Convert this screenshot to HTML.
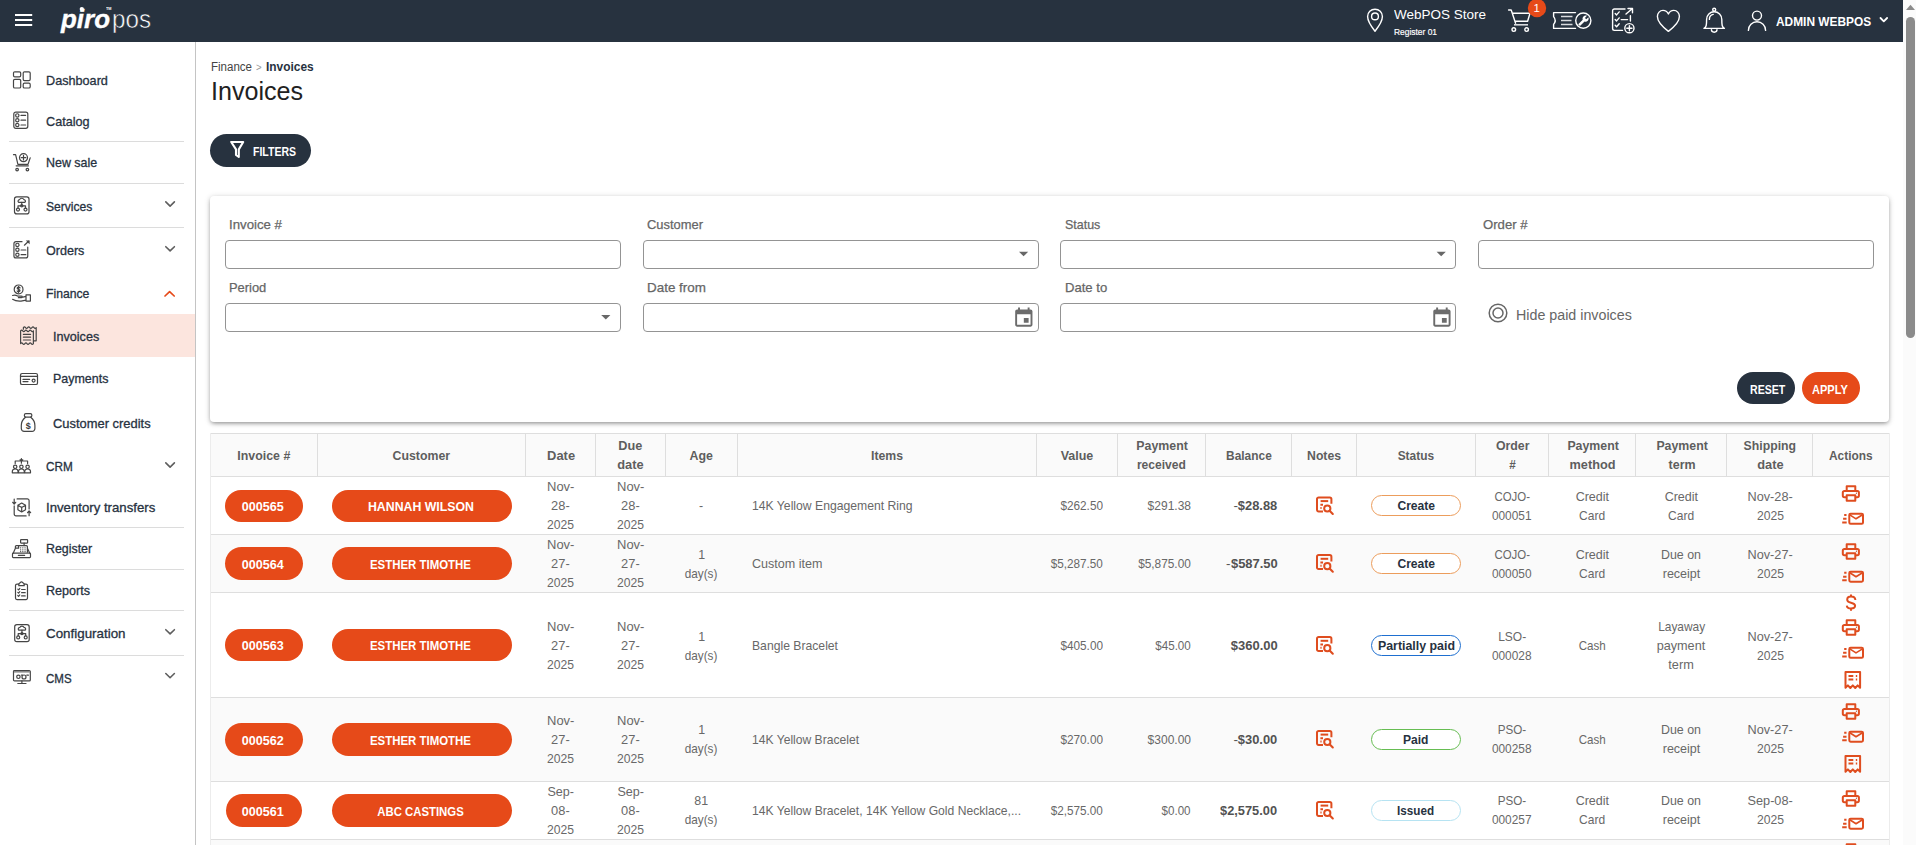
<!DOCTYPE html>
<html><head><meta charset="utf-8"><title>Invoices</title>
<style>
html,body{margin:0;padding:0;background:#fff;overflow:hidden;}
body{width:1916px;height:845px;overflow:hidden;position:relative;font-family:"Liberation Sans", sans-serif;}
.t{position:absolute;white-space:nowrap;line-height:1;}
.b{position:absolute;box-sizing:border-box;}

.inp{border:1px solid #949494;border-radius:4px;background:#fff;}
.pill{background:#e64a19;border-radius:17px;}
.badge{border-radius:11px;background:#fff;}
.hl{background:#e2e2e2;}

</style></head><body>
<div class="b " style="left:0px;top:0px;width:1903px;height:42px;background:#27323f;"></div>
<div class="b " style="left:1903px;top:0px;width:13px;height:845px;background:#fbfbfb;"></div>
<div class="b " style="left:1906px;top:17px;width:9px;height:321px;background:#8b8b8b;border-radius:4.5px;"></div>
<div class="b " style="left:195px;top:42px;width:1px;height:803px;background:#c4c4c4;"></div>
<div class="b " style="left:0px;top:314px;width:195px;height:43px;background:#fce5de;"></div>
<div class="b " style="left:9px;top:141px;width:175px;height:1px;background:#dcdcdc;"></div>
<div class="b " style="left:9px;top:183px;width:175px;height:1px;background:#dcdcdc;"></div>
<div class="b " style="left:9px;top:227px;width:175px;height:1px;background:#dcdcdc;"></div>
<div class="b " style="left:9px;top:527px;width:175px;height:1px;background:#dcdcdc;"></div>
<div class="b " style="left:9px;top:569px;width:175px;height:1px;background:#dcdcdc;"></div>
<div class="b " style="left:9px;top:610px;width:175px;height:1px;background:#dcdcdc;"></div>
<div class="b " style="left:9px;top:655px;width:175px;height:1px;background:#dcdcdc;"></div>
<div class="b " style="left:210px;top:134px;width:101px;height:33px;background:#27323f;border-radius:16.5px;"></div>
<div class="b " style="left:210px;top:196px;width:1679px;height:226px;background:#fff;border-radius:4px;box-shadow:0 2px 4px -1px rgba(0,0,0,.38),0 1px 6px 0 rgba(0,0,0,.16);"></div>
<div class="b inp" style="left:225px;top:240px;width:396px;height:29px;"></div>
<div class="b inp" style="left:643px;top:240px;width:396px;height:29px;"></div>
<div class="b inp" style="left:1060px;top:240px;width:396px;height:29px;"></div>
<div class="b inp" style="left:1478px;top:240px;width:396px;height:29px;"></div>
<div class="b inp" style="left:225px;top:303px;width:396px;height:29px;"></div>
<div class="b inp" style="left:643px;top:303px;width:396px;height:29px;"></div>
<div class="b inp" style="left:1060px;top:303px;width:396px;height:29px;"></div>
<div class="b " style="left:1737px;top:372px;width:58px;height:32px;background:#27323f;border-radius:16px;"></div>
<div class="b " style="left:1802px;top:372px;width:58px;height:32px;background:#e64a19;border-radius:16px;"></div>
<div class="b " style="left:210px;top:433px;width:1680px;height:43px;background:#fafafa;"></div>
<div class="b " style="left:210px;top:535px;width:1680px;height:57px;background:#fafafa;"></div>
<div class="b " style="left:210px;top:698px;width:1680px;height:83px;background:#fafafa;"></div>
<div class="b " style="left:210px;top:840px;width:1680px;height:6px;background:#fafafa;"></div>
<div class="b " style="left:210px;top:433px;width:1680px;height:1px;background:#dedede;"></div>
<div class="b " style="left:210px;top:476px;width:1680px;height:1px;background:#dedede;"></div>
<div class="b " style="left:210px;top:534px;width:1680px;height:1px;background:#dedede;"></div>
<div class="b " style="left:210px;top:592px;width:1680px;height:1px;background:#dedede;"></div>
<div class="b " style="left:210px;top:697px;width:1680px;height:1px;background:#dedede;"></div>
<div class="b " style="left:210px;top:781px;width:1680px;height:1px;background:#dedede;"></div>
<div class="b " style="left:210px;top:839px;width:1680px;height:1px;background:#dedede;"></div>
<div class="b " style="left:210px;top:433px;width:1px;height:412px;background:#ececec;"></div>
<div class="b " style="left:1889px;top:433px;width:1px;height:412px;background:#ececec;"></div>
<div class="b " style="left:317px;top:434px;width:1px;height:42px;background:#dedede;"></div>
<div class="b " style="left:525px;top:434px;width:1px;height:42px;background:#dedede;"></div>
<div class="b " style="left:595px;top:434px;width:1px;height:42px;background:#dedede;"></div>
<div class="b " style="left:665px;top:434px;width:1px;height:42px;background:#dedede;"></div>
<div class="b " style="left:737px;top:434px;width:1px;height:42px;background:#dedede;"></div>
<div class="b " style="left:1036px;top:434px;width:1px;height:42px;background:#dedede;"></div>
<div class="b " style="left:1117px;top:434px;width:1px;height:42px;background:#dedede;"></div>
<div class="b " style="left:1205px;top:434px;width:1px;height:42px;background:#dedede;"></div>
<div class="b " style="left:1291px;top:434px;width:1px;height:42px;background:#dedede;"></div>
<div class="b " style="left:1356px;top:434px;width:1px;height:42px;background:#dedede;"></div>
<div class="b " style="left:1475px;top:434px;width:1px;height:42px;background:#dedede;"></div>
<div class="b " style="left:1548px;top:434px;width:1px;height:42px;background:#dedede;"></div>
<div class="b " style="left:1635px;top:434px;width:1px;height:42px;background:#dedede;"></div>
<div class="b " style="left:1726px;top:434px;width:1px;height:42px;background:#dedede;"></div>
<div class="b " style="left:1812px;top:434px;width:1px;height:42px;background:#dedede;"></div>
<div class="b pill" style="left:225px;top:490px;width:78px;height:32px;"></div>
<div class="b pill" style="left:332px;top:490px;width:180px;height:32px;"></div>
<div class="b badge" style="left:1371px;top:495.0px;width:90px;height:21px;border:1px solid #ec9d5c;"></div>
<div class="b pill" style="left:225px;top:547.4px;width:78px;height:32.5px;"></div>
<div class="b pill" style="left:332px;top:547.4px;width:180px;height:32.5px;"></div>
<div class="b badge" style="left:1371px;top:552.7px;width:90px;height:21px;border:1px solid #ec9d5c;"></div>
<div class="b pill" style="left:225px;top:629.2px;width:78px;height:31.6px;"></div>
<div class="b pill" style="left:332px;top:629.2px;width:180px;height:31.6px;"></div>
<div class="b badge" style="left:1371px;top:634.7px;width:90px;height:21px;border:1px solid #1e6fd0;"></div>
<div class="b pill" style="left:225px;top:722.9px;width:78px;height:33px;"></div>
<div class="b pill" style="left:332px;top:722.9px;width:180px;height:33px;"></div>
<div class="b badge" style="left:1371px;top:728.5px;width:90px;height:21px;border:1px solid #66bd52;"></div>
<div class="b pill" style="left:225.8px;top:794px;width:76.4px;height:32.8px;"></div>
<div class="b pill" style="left:332px;top:794px;width:180px;height:32.8px;"></div>
<div class="b badge" style="left:1371px;top:799.5px;width:90px;height:21px;border:1px solid #b6e3f2;"></div>
<svg class="b" style="left:0;top:0" width="1916" height="845" viewBox="0 0 1916 845" fill="none">
<path d="M1906 10 L1910.5 4.8 L1915 10Z" fill="#8b8b8b"/>
<rect x="15" y="14" width="17.2" height="2" fill="#fff"/>
<rect x="15" y="19" width="17.2" height="2" fill="#fff"/>
<rect x="15" y="24" width="17.2" height="2" fill="#fff"/>
<circle cx="81.8" cy="9.1" r="2.15" fill="#fff"/>
<path d="M1375 31.3 C1375 31.3 1367.6 22 1367.6 16.6 A7.4 7.4 0 0 1 1382.4 16.6 C1382.4 22 1375 31.3 1375 31.3Z" stroke="#fff" stroke-width="1.4" stroke-linecap="round" stroke-linejoin="round"/><circle cx="1375" cy="16.4" r="3.4" stroke="#fff" stroke-width="1.4" stroke-linecap="round" stroke-linejoin="round"/>
<path d="M1508.6 10 H1511.2 L1515.6 23.2 M1513 13.2 H1530 L1527.6 21.3 H1515.2" stroke="#fff" stroke-width="1.4" stroke-linecap="round" stroke-linejoin="round"/><path d="M1514 24.8 H1528" stroke="#d8dadd" stroke-width="1.6"/><circle cx="1513.8" cy="29.6" r="1.8" stroke="#fff" stroke-width="1.4" stroke-linecap="round" stroke-linejoin="round"/><circle cx="1526.6" cy="29.6" r="1.8" stroke="#fff" stroke-width="1.4" stroke-linecap="round" stroke-linejoin="round"/>
<circle cx="1537" cy="8.1" r="9.2" fill="#e64a19"/>
<path d="M1575.5 12.6 H1553.6 V16.6 Q1556.8 20.5 1553.6 24.4 V28.4 H1575.5" stroke="#fff" stroke-width="1.4" stroke-linecap="round" stroke-linejoin="round"/><path d="M1561 16.6 H1572.5 M1561 20.5 H1571.5 M1561 24.4 H1572.5" stroke="#d8dadd" stroke-width="1.5"/><circle cx="1583.3" cy="20.6" r="7.6" stroke="#fff" stroke-width="1.4" stroke-linecap="round" stroke-linejoin="round"/><g transform="translate(1583.5 20.7) scale(-0.47 0.47) translate(-12 -12)"><path fill="#fff" d="M22.7 19l-9.1-9.1c.9-2.3.4-5-1.5-6.9-2-2-5-2.4-7.4-1.3L9 6 6 9 1.6 4.7C.4 7.1.9 10.1 2.9 12.1c1.9 1.9 4.6 2.4 6.9 1.5l9.1 9.1c.4.4 1 .4 1.4 0l2.3-2.3c.5-.4.5-1.1.1-1.4z"/></g>
<path d="M1625 9 H1614.4 A1.8 1.8 0 0 0 1612.6 10.8 V28.6 A1.8 1.8 0 0 0 1614.4 30.4 H1622.5" stroke="#fff" stroke-width="1.4" stroke-linecap="round" stroke-linejoin="round"/><path d="M1615.2 13.4 l1.4 1.5 l2.6 -3 M1615.2 19.4 l1.4 1.5 l2.6 -3 M1615.2 25.2 l1.4 1.5 l2.6 -3" stroke="#fff" stroke-width="1.4" stroke-linecap="round" stroke-linejoin="round" stroke-width="1.3"/><path d="M1626 14 L1632.2 8.8 M1628 8.5 H1632.5 V12.8" stroke="#fff" stroke-width="1.4" stroke-linecap="round" stroke-linejoin="round" stroke-width="1.2"/><path d="M1621.2 19.6 H1627.6 M1630.4 15.6 V21" stroke="#fff" stroke-width="1.4" stroke-linecap="round" stroke-linejoin="round" stroke-width="1.5"/><circle cx="1629.4" cy="28.2" r="4.6" stroke="#fff" stroke-width="1.4" stroke-linecap="round" stroke-linejoin="round" stroke-width="1.3"/><path d="M1626.8 28.2 H1632 M1629.4 25.6 V30.8" stroke="#fff" stroke-width="1.4" stroke-linecap="round" stroke-linejoin="round" stroke-width="1.4"/>
<path d="M1668.4 31.4 C1660 25 1657.4 20.6 1657.4 16.6 C1657.4 12.9 1660 10.4 1663 10.4 C1665.5 10.4 1667.4 11.9 1668.4 13.9 C1669.4 11.9 1671.3 10.4 1673.8 10.4 C1676.8 10.4 1679.4 12.9 1679.4 16.6 C1679.4 20.6 1676.8 25 1668.4 31.4Z" stroke="#fff" stroke-width="1.4" stroke-linecap="round" stroke-linejoin="round"/>
<circle cx="1714.2" cy="9.8" r="1.5" stroke="#fff" stroke-width="1.4" stroke-linecap="round" stroke-linejoin="round" stroke-width="1.2"/><path d="M1704 28.4 C1706.4 27 1706.6 25 1706.6 19.4 A7.6 7.6 0 0 1 1721.8 19.4 C1721.8 25 1722 27 1724.4 28.4 Z" stroke="#fff" stroke-width="1.4" stroke-linecap="round" stroke-linejoin="round"/><path d="M1709.4 19.4 A5 5 0 0 1 1713.2 14.4" stroke="#fff" stroke-width="1.4" stroke-linecap="round" stroke-linejoin="round" stroke-width="1"/><path d="M1711.4 29.6 A2.8 2.6 0 0 0 1717 29.6" stroke="#fff" stroke-width="1.4" stroke-linecap="round" stroke-linejoin="round"/>
<circle cx="1757" cy="15.6" r="4.5" stroke="#fff" stroke-width="1.4" stroke-linecap="round" stroke-linejoin="round" stroke-width="1.5"/><path d="M1748.4 30.4 A8.6 8.6 0 0 1 1765.6 30.4" stroke="#fff" stroke-width="1.4" stroke-linecap="round" stroke-linejoin="round" stroke-width="1.5"/>
<path d="M1880.5 18 L1883.8 21.3 L1887.1 18" stroke="#fff" stroke-width="1.8" stroke-linecap="round" stroke-linejoin="round"/>
<path d="M165.8 201.9 L170.1 206.1 L174.4 201.9" stroke="#5e5e5e" stroke-width="1.6" stroke-linecap="round" stroke-linejoin="round"/>
<path d="M165.8 246.7 L170.1 250.89999999999998 L174.4 246.7" stroke="#5e5e5e" stroke-width="1.6" stroke-linecap="round" stroke-linejoin="round"/>
<path d="M165.8 462.9 L170.1 467.09999999999997 L174.4 462.9" stroke="#5e5e5e" stroke-width="1.6" stroke-linecap="round" stroke-linejoin="round"/>
<path d="M165.8 629.7 L170.1 633.9000000000001 L174.4 629.7" stroke="#5e5e5e" stroke-width="1.6" stroke-linecap="round" stroke-linejoin="round"/>
<path d="M165.8 673.5 L170.1 677.7 L174.4 673.5" stroke="#5e5e5e" stroke-width="1.6" stroke-linecap="round" stroke-linejoin="round"/>
<path d="M165 296 L169.6 291.7 L174.2 296" stroke="#e64a19" stroke-width="1.7" stroke-linecap="round" stroke-linejoin="round"/>
<g transform="translate(13 71.3)" ><rect x=".5" y=".5" width="7.2" height="5" rx="1.3" stroke="#454545" stroke-width="1.2" stroke-linecap="round" stroke-linejoin="round"/><rect x=".5" y="8" width="7.2" height="8.7" rx="1.3" stroke="#454545" stroke-width="1.2" stroke-linecap="round" stroke-linejoin="round"/><rect x="10.2" y=".5" width="7" height="8.8" rx="1.3" stroke="#454545" stroke-width="1.2" stroke-linecap="round" stroke-linejoin="round"/><rect x="10.2" y="11.8" width="7" height="4.9" rx="1.3" stroke="#454545" stroke-width="1.2" stroke-linecap="round" stroke-linejoin="round"/></g>
<g transform="translate(13 111.5)" ><rect x=".8" y=".6" width="14" height="16.2" rx="2" stroke="#454545" stroke-width="1.2" stroke-linecap="round" stroke-linejoin="round"/><circle cx="4.3" cy="3.9" r="1.65" stroke="#454545" stroke-width="1.2" stroke-linecap="round" stroke-linejoin="round"/><circle cx="4.3" cy="8.7" r="1.65" stroke="#454545" stroke-width="1.2" stroke-linecap="round" stroke-linejoin="round"/><circle cx="4.3" cy="13.5" r="1.65" stroke="#454545" stroke-width="1.2" stroke-linecap="round" stroke-linejoin="round"/><path d="M8 3.9 H12.6 M8 8.7 H12.6 M8 13.5 H12.6" stroke="#454545" stroke-width="1.2" stroke-linecap="round" stroke-linejoin="round" stroke-width="1.4"/></g>
<g transform="translate(13 153.3)" ><path d="M.5 1.4 H2.6 L4.9 11 H15 L17.2 4.6 M3.2 12.5 H15.4" stroke="#454545" stroke-width="1.2" stroke-linecap="round" stroke-linejoin="round"/><circle cx="10.5" cy="4.4" r="4" stroke="#454545" stroke-width="1.2" stroke-linecap="round" stroke-linejoin="round"/><path d="M8.2 4.4 H12.8 M10.5 2.1 V6.7" stroke="#454545" stroke-width="1.2" stroke-linecap="round" stroke-linejoin="round"/><circle cx="4.1" cy="16.3" r="1.3" stroke="#454545" stroke-width="1.2" stroke-linecap="round" stroke-linejoin="round"/><circle cx="14.4" cy="16.3" r="1.3" stroke="#454545" stroke-width="1.2" stroke-linecap="round" stroke-linejoin="round"/></g>
<g transform="translate(14 196.4)" ><rect x=".5" y=".5" width="14.5" height="17" rx="2.2" stroke="#454545" stroke-width="1.2" stroke-linecap="round" stroke-linejoin="round"/><path d="M4.6 6 A1.6 1.6 0 0 1 5.6 3.2 A2.4 2.4 0 0 1 9.9 3.2 A1.6 1.6 0 0 1 10.9 6 Z" stroke="#454545" stroke-width="1.2" stroke-linecap="round" stroke-linejoin="round" stroke-width=".9"/><path d="M7.75 6 V9.4 M4 11.5 V9.4 H11.5 V11.5" stroke="#454545" stroke-width="1.2" stroke-linecap="round" stroke-linejoin="round" stroke-width=".9"/><circle cx="4" cy="13.2" r="1.5" stroke="#454545" stroke-width="1.2" stroke-linecap="round" stroke-linejoin="round" stroke-width=".9"/><circle cx="11.5" cy="13.2" r="1.5" stroke="#454545" stroke-width="1.2" stroke-linecap="round" stroke-linejoin="round" stroke-width=".9"/><circle cx="7.75" cy="9.4" r="1.1" stroke="#454545" stroke-width="1.2" stroke-linecap="round" stroke-linejoin="round" stroke-width=".9"/></g>
<g transform="translate(13 240.2)" ><path d="M9 1.45 H2.9 A1.95 1.95 0 0 0 .95 3.4 V15.8 A1.95 1.95 0 0 0 2.9 17.75 H12.8 A1.95 1.95 0 0 0 14.75 15.8 V6.8" stroke="#454545" stroke-width="1.2" stroke-linecap="round" stroke-linejoin="round"/><circle cx="4.4" cy="4.7" r="1.65" stroke="#454545" stroke-width="1.2" stroke-linecap="round" stroke-linejoin="round"/><circle cx="4.4" cy="9.6" r="1.65" stroke="#454545" stroke-width="1.2" stroke-linecap="round" stroke-linejoin="round"/><circle cx="4.4" cy="14.5" r="1.65" stroke="#454545" stroke-width="1.2" stroke-linecap="round" stroke-linejoin="round"/><path d="M8.1 9.8 H12.8 M8.1 14.5 H12.8" stroke="#454545" stroke-width="1.2" stroke-linecap="round" stroke-linejoin="round" stroke-width="1.4"/><path d="M11.4 5 L15.6 1" stroke="#454545" stroke-width="1.2" stroke-linecap="round" stroke-linejoin="round" stroke-width="1.3"/><path d="M12.8 .2 H16.6 V4 Z" fill="#454545"/></g>
<g transform="translate(12 284.5)" ><circle cx="6.6" cy="4.9" r="4.4" stroke="#454545" stroke-width="1.2" stroke-linecap="round" stroke-linejoin="round"/><path d="M8 3.5 C8 2.4 5.2 2.4 5.2 3.8 C5.2 5.2 8 4.6 8 6 C8 7.4 5.2 7.4 5.2 6.3 M6.6 1.8 V8" stroke="#454545" stroke-width="1.2" stroke-linecap="round" stroke-linejoin="round" stroke-width=".85"/><path d="M.6 11 C2.5 10.4 4 10.6 5.6 11.6 H9.4 C10.6 11.6 10.6 13.2 9.4 13.2 H6.4 M9.8 12.9 L14 11.8 M.6 14.8 C3 16.4 6 16.8 9 16.6 L14 15.6 M14 10.4 H18.4 V16.6 H14 Z" stroke="#454545" stroke-width="1.2" stroke-linecap="round" stroke-linejoin="round"/></g>
<g transform="translate(20 326)" ><path d="M3.4 3.2 V1.6 q1.07 -1.5 2.13 0 t2.13 0 t2.13 0 t2.13 0 t2.13 0 t2.13 0 V14.8 H14" stroke="#454545" stroke-width="1.2" stroke-linecap="round" stroke-linejoin="round"/><path d="M.6 4.8 q1.07 -1.5 2.13 0 t2.13 0 t2.13 0 t2.13 0 t2.13 0 t2.13 0 V17.6 q-1.07 1.5 -2.13 0 t-2.13 0 t-2.13 0 t-2.13 0 t-2.13 0 t-2.13 0 Z" stroke="#454545" stroke-width="1.2" stroke-linecap="round" stroke-linejoin="round"/><path d="M3.4 8.4 H10.6 M3.4 11.2 H10.6 M3.4 14 H10.6" stroke="#454545" stroke-width="1.2" stroke-linecap="round" stroke-linejoin="round"/></g>
<g transform="translate(20 373)" ><rect x=".5" y=".5" width="17" height="11" rx="1.6" stroke="#454545" stroke-width="1.2" stroke-linecap="round" stroke-linejoin="round"/><path d="M.5 3.4 H17.5 M3 6.4 H9.6 M3 8.6 H8" stroke="#454545" stroke-width="1.2" stroke-linecap="round" stroke-linejoin="round"/><circle cx="13.6" cy="7.6" r="1.5" stroke="#454545" stroke-width="1.2" stroke-linecap="round" stroke-linejoin="round"/></g>
<g transform="translate(20.5 413)" ><rect x="3.9" y=".6" width="7.4" height="3.5" rx="1.4" stroke="#454545" stroke-width="1.2" stroke-linecap="round" stroke-linejoin="round"/><path d="M5 4.2 C2.4 6.2 .8 9 .8 12.4 V15.6 A2.8 2.8 0 0 0 3.6 18.4 H11.6 A2.8 2.8 0 0 0 14.4 15.6 V12.4 C14.4 9 12.8 6.2 10.2 4.2" stroke="#454545" stroke-width="1.2" stroke-linecap="round" stroke-linejoin="round"/></g>
<g transform="translate(12 458.2)" ><path d="M9.4 .4 V5 M3.2 5.4 V2.8 H15.6 V5.4 M8 1.6 H10.8" stroke="#454545" stroke-width="1.2" stroke-linecap="round" stroke-linejoin="round" stroke-width=".95"/><circle cx="3.2" cy="8.6" r="1.7" stroke="#454545" stroke-width="1.2" stroke-linecap="round" stroke-linejoin="round" stroke-width=".95"/><path d="M0.30000000000000027 14.6 V13.4 A2.9 2.6 0 0 1 6.1 13.4 V14.6 Z" stroke="#454545" stroke-width="1.2" stroke-linecap="round" stroke-linejoin="round" stroke-width=".95"/><circle cx="9.4" cy="8.6" r="1.7" stroke="#454545" stroke-width="1.2" stroke-linecap="round" stroke-linejoin="round" stroke-width=".95"/><path d="M6.5 14.6 V13.4 A2.9 2.6 0 0 1 12.3 13.4 V14.6 Z" stroke="#454545" stroke-width="1.2" stroke-linecap="round" stroke-linejoin="round" stroke-width=".95"/><circle cx="15.6" cy="8.6" r="1.7" stroke="#454545" stroke-width="1.2" stroke-linecap="round" stroke-linejoin="round" stroke-width=".95"/><path d="M12.7 14.6 V13.4 A2.9 2.6 0 0 1 18.5 13.4 V14.6 Z" stroke="#454545" stroke-width="1.2" stroke-linecap="round" stroke-linejoin="round" stroke-width=".95"/></g>
<g transform="translate(12.5 498.3)" ><path d="M4.6 .6 H14.8 A1.8 1.8 0 0 1 16.6 2.4 V10.6 M13.6 17.6 H3.5 A1.8 1.8 0 0 1 1.7 15.8 V7.6" stroke="#454545" stroke-width="1.2" stroke-linecap="round" stroke-linejoin="round"/><path d="M1.7 .8 V5.6 M.2 4 L1.7 5.8 L3.2 4 M16.6 17.4 V12.8 M15.1 14.4 L16.6 12.6 L18.1 14.4" stroke="#454545" stroke-width="1.2" stroke-linecap="round" stroke-linejoin="round"/><path d="M9.2 4.7 L13 6.9 V11.4 L9.2 13.7 L5.4 11.4 V6.9 Z M5.4 6.9 L9.2 9.1 L13 6.9 M9.2 9.1 V13.7" stroke="#454545" stroke-width="1.2" stroke-linecap="round" stroke-linejoin="round" stroke-width="1.05"/></g>
<g transform="translate(12 539.2)" ><rect x="8.6" y=".5" width="7" height="3.4" rx=".5" stroke="#454545" stroke-width="1.2" stroke-linecap="round" stroke-linejoin="round"/><path d="M12.1 3.9 V6.4" stroke="#454545" stroke-width="1.2" stroke-linecap="round" stroke-linejoin="round"/><path d="M3.4 9 V7.4 A1 1 0 0 1 4.4 6.4 H14.4 A1 1 0 0 1 15.4 7.4 V13 M3.4 9 H6.6 V6.6 M1.2 14 L3.4 9 M15.4 9 L17.8 14" stroke="#454545" stroke-width="1.2" stroke-linecap="round" stroke-linejoin="round"/><rect x=".5" y="14" width="18" height="4.4" rx=".8" stroke="#454545" stroke-width="1.2" stroke-linecap="round" stroke-linejoin="round"/><path d="M6.4 16.2 H12.6" stroke="#454545" stroke-width="1.2" stroke-linecap="round" stroke-linejoin="round"/><path d="M8.6 8.6 h.1 M10.8 8.6 h.1 M13 8.6 h.1 M8.6 10.6 h.1 M10.8 10.6 h.1 M13 10.6 h.1 M8.6 12.4 h.1 M10.8 12.4 h.1 M13 12.4 h.1" stroke="#454545" stroke-width="1.2" stroke-linecap="round" stroke-linejoin="round" stroke-width="1.2"/></g>
<g transform="translate(15 581.3)" ><path d="M3.8 2.8 H2 A1.5 1.5 0 0 0 .5 4.3 V16.8 A1.5 1.5 0 0 0 2 18.3 H11 A1.5 1.5 0 0 0 12.5 16.8 V4.3 A1.5 1.5 0 0 0 11 2.8 H9.2" stroke="#454545" stroke-width="1.2" stroke-linecap="round" stroke-linejoin="round"/><path d="M3.8 4.4 V2.6 L5.4 1.2 A1.3 1.3 0 0 1 7.6 1.2 L9.2 2.6 V4.4 Z" stroke="#454545" stroke-width="1.2" stroke-linecap="round" stroke-linejoin="round"/><path d="M2.8 7.8 l.8 .8 l1.2 -1.4 M2.8 11 l.8 .8 l1.2 -1.4 M2.8 14.2 l.8 .8 l1.2 -1.4 M6.6 8.2 H10.2 M6.6 11.4 H10.2 M6.6 14.6 H10.2" stroke="#454545" stroke-width="1.2" stroke-linecap="round" stroke-linejoin="round" stroke-width=".9"/></g>
<g transform="translate(14.2 624.2)" ><rect x=".5" y=".5" width="14.5" height="17" rx="2.2" stroke="#454545" stroke-width="1.2" stroke-linecap="round" stroke-linejoin="round"/><path d="M4.6 6 A1.6 1.6 0 0 1 5.6 3.2 A2.4 2.4 0 0 1 9.9 3.2 A1.6 1.6 0 0 1 10.9 6 Z" stroke="#454545" stroke-width="1.2" stroke-linecap="round" stroke-linejoin="round" stroke-width=".9"/><path d="M7.75 6 V9.4 M4 11.5 V9.4 H11.5 V11.5" stroke="#454545" stroke-width="1.2" stroke-linecap="round" stroke-linejoin="round" stroke-width=".9"/><circle cx="4" cy="13.2" r="1.5" stroke="#454545" stroke-width="1.2" stroke-linecap="round" stroke-linejoin="round" stroke-width=".9"/><circle cx="11.5" cy="13.2" r="1.5" stroke="#454545" stroke-width="1.2" stroke-linecap="round" stroke-linejoin="round" stroke-width=".9"/><circle cx="7.75" cy="9.4" r="1.1" stroke="#454545" stroke-width="1.2" stroke-linecap="round" stroke-linejoin="round" stroke-width=".9"/></g>
<g transform="translate(13 670)" ><rect x=".5" y=".5" width="16.8" height="10.4" rx="1" stroke="#454545" stroke-width="1.2" stroke-linecap="round" stroke-linejoin="round"/><path d="M.9 1.8 H17" stroke="#8a8a8a" stroke-width="1.6"/><path d="M8.9 10.9 V13.2 M4.8 13.5 H13" stroke="#454545" stroke-width="1.2" stroke-linecap="round" stroke-linejoin="round"/><circle cx="5.4" cy="6.8" r="1.7" stroke="#454545" stroke-width="1.2" stroke-linecap="round" stroke-linejoin="round" stroke-width=".9"/><circle cx="11" cy="7" r="2" stroke="#454545" stroke-width="1.2" stroke-linecap="round" stroke-linejoin="round" stroke-width=".9"/><path d="M8.4 5.2 H9.6 M13.8 5.2 H15.4" stroke="#454545" stroke-width="1.2" stroke-linecap="round" stroke-linejoin="round" stroke-width=".9"/></g>
<path d="M231.2 142 H243.2 L238.8 149.4 V157 L236 155 V149.4 Z" stroke="#fff" stroke-width="2.1" stroke-linejoin="round"/>
<path d="M1019 251.8 h9.2 l-4.6 4.5z" fill="#676767"/>
<path d="M1436.6 251.8 h9.2 l-4.6 4.5z" fill="#676767"/>
<path d="M601.2 315 h9.2 l-4.6 4.5z" fill="#676767"/>
<g transform="translate(1012.3000000000001 306.5) scale(.96)"><path d="M17 12h-5v5h5v-5zM16 1v2H8V1H6v2H5c-1.11 0-1.99.9-1.99 2L3 19c0 1.1.89 2 2 2h14c1.1 0 2-.9 2-2V5c0-1.1-.9-2-2-2h-1V1h-2zm3 18H5V8h14v11z" fill="#6c6c6c"/></g>
<g transform="translate(1430.4 306.5) scale(.96)"><path d="M17 12h-5v5h5v-5zM16 1v2H8V1H6v2H5c-1.11 0-1.99.9-1.99 2L3 19c0 1.1.89 2 2 2h14c1.1 0 2-.9 2-2V5c0-1.1-.9-2-2-2h-1V1h-2zm3 18H5V8h14v11z" fill="#6c6c6c"/></g>
<circle cx="1498" cy="313" r="8.8" stroke="#666" stroke-width="1.5"/><circle cx="1498" cy="313" r="5" stroke="#666" stroke-width="1.5"/>
<g transform="translate(1315.6000000000001 496.0)" ><path d="M7.4 15.4 H3 A1.6 1.6 0 0 1 1.4 13.8 V3 A1.6 1.6 0 0 1 3 1.4 H14.2 A1.6 1.6 0 0 1 15.8 3 V7.8" stroke="#df4d1f" stroke-width="2" stroke-linejoin="round" stroke-linecap="butt"/><path d="M5 5.1 H12.6" stroke="#df4d1f" stroke-width="2" stroke-linejoin="round" stroke-linecap="butt" stroke-width="1.8"/><path d="M4.8 8.7 H7.4 M4.8 12 H6" stroke="#df4d1f" stroke-width="2" stroke-linejoin="round" stroke-linecap="butt" stroke-width="1.6"/><circle cx="11.7" cy="12.5" r="3.1" stroke="#df4d1f" stroke-width="2" stroke-linejoin="round" stroke-linecap="butt" stroke-width="1.8"/><path d="M14 14.8 L17.2 18" stroke="#df4d1f" stroke-linejoin="round" stroke-linecap="round" stroke-width="2.1"/></g>
<g transform="translate(1841.8000000000002 485.15)" ><path d="M4.9 5.8 V1 H13.5 V5.8" stroke="#df4d1f" stroke-width="2" stroke-linejoin="round" stroke-linecap="butt"/><path d="M4.9 12 H2.6 A1.6 1.6 0 0 1 1 10.4 V7.4 A1.6 1.6 0 0 1 2.6 5.8 H15.5 A1.6 1.6 0 0 1 17.1 7.4 V10.4 A1.6 1.6 0 0 1 15.5 12 H13.5" stroke="#df4d1f" stroke-width="2" stroke-linejoin="round" stroke-linecap="butt"/><rect x="4.9" y="10.2" width="8.6" height="5.5" stroke="#df4d1f" stroke-width="2" stroke-linejoin="round" stroke-linecap="butt"/><circle cx="14.6" cy="8" r=".6" fill="#b03a14"/></g>
<g transform="translate(1841.8000000000002 512.8)" ><rect x="7.5" y="1" width="13.7" height="9.9" rx="1.3" stroke="#df4d1f" stroke-width="2" stroke-linejoin="round" stroke-linecap="butt"/><path d="M8 2 L14.2 6 L20.7 2" stroke="#df4d1f" stroke-linejoin="round" stroke-linecap="round" stroke-width="1.6"/><path d="M2.4 2.1 H4.7 M1.3 6 H4.7 M.4 9.6 H4.9" stroke="#df4d1f" stroke-width="2" stroke-linejoin="round" stroke-linecap="butt" stroke-width="1.8"/></g>
<g transform="translate(1315.6000000000001 553.7)" ><path d="M7.4 15.4 H3 A1.6 1.6 0 0 1 1.4 13.8 V3 A1.6 1.6 0 0 1 3 1.4 H14.2 A1.6 1.6 0 0 1 15.8 3 V7.8" stroke="#df4d1f" stroke-width="2" stroke-linejoin="round" stroke-linecap="butt"/><path d="M5 5.1 H12.6" stroke="#df4d1f" stroke-width="2" stroke-linejoin="round" stroke-linecap="butt" stroke-width="1.8"/><path d="M4.8 8.7 H7.4 M4.8 12 H6" stroke="#df4d1f" stroke-width="2" stroke-linejoin="round" stroke-linecap="butt" stroke-width="1.6"/><circle cx="11.7" cy="12.5" r="3.1" stroke="#df4d1f" stroke-width="2" stroke-linejoin="round" stroke-linecap="butt" stroke-width="1.8"/><path d="M14 14.8 L17.2 18" stroke="#df4d1f" stroke-linejoin="round" stroke-linecap="round" stroke-width="2.1"/></g>
<g transform="translate(1841.8000000000002 543.15)" ><path d="M4.9 5.8 V1 H13.5 V5.8" stroke="#df4d1f" stroke-width="2" stroke-linejoin="round" stroke-linecap="butt"/><path d="M4.9 12 H2.6 A1.6 1.6 0 0 1 1 10.4 V7.4 A1.6 1.6 0 0 1 2.6 5.8 H15.5 A1.6 1.6 0 0 1 17.1 7.4 V10.4 A1.6 1.6 0 0 1 15.5 12 H13.5" stroke="#df4d1f" stroke-width="2" stroke-linejoin="round" stroke-linecap="butt"/><rect x="4.9" y="10.2" width="8.6" height="5.5" stroke="#df4d1f" stroke-width="2" stroke-linejoin="round" stroke-linecap="butt"/><circle cx="14.6" cy="8" r=".6" fill="#b03a14"/></g>
<g transform="translate(1841.8000000000002 570.75)" ><rect x="7.5" y="1" width="13.7" height="9.9" rx="1.3" stroke="#df4d1f" stroke-width="2" stroke-linejoin="round" stroke-linecap="butt"/><path d="M8 2 L14.2 6 L20.7 2" stroke="#df4d1f" stroke-linejoin="round" stroke-linecap="round" stroke-width="1.6"/><path d="M2.4 2.1 H4.7 M1.3 6 H4.7 M.4 9.6 H4.9" stroke="#df4d1f" stroke-width="2" stroke-linejoin="round" stroke-linecap="butt" stroke-width="1.8"/></g>
<g transform="translate(1315.6000000000001 635.7)" ><path d="M7.4 15.4 H3 A1.6 1.6 0 0 1 1.4 13.8 V3 A1.6 1.6 0 0 1 3 1.4 H14.2 A1.6 1.6 0 0 1 15.8 3 V7.8" stroke="#df4d1f" stroke-width="2" stroke-linejoin="round" stroke-linecap="butt"/><path d="M5 5.1 H12.6" stroke="#df4d1f" stroke-width="2" stroke-linejoin="round" stroke-linecap="butt" stroke-width="1.8"/><path d="M4.8 8.7 H7.4 M4.8 12 H6" stroke="#df4d1f" stroke-width="2" stroke-linejoin="round" stroke-linecap="butt" stroke-width="1.6"/><circle cx="11.7" cy="12.5" r="3.1" stroke="#df4d1f" stroke-width="2" stroke-linejoin="round" stroke-linecap="butt" stroke-width="1.8"/><path d="M14 14.8 L17.2 18" stroke="#df4d1f" stroke-linejoin="round" stroke-linecap="round" stroke-width="2.1"/></g>
<g transform="translate(1846.1 594.1)" ><path d="M9.3 5.9 C9.1 3.7 7.4 2.5 4.9 2.5 C2.5 2.5 1.1 3.8 1.1 5.6 C1.1 7.3 2.4 8 4.9 8.6 C7.6 9.2 9 10 9 11.7 C9 13.4 7.4 14.4 4.9 14.4 C2.5 14.4 .9 13.3 .7 11.5 M4.9 .3 V2.5 M4.9 14.4 V16.7" stroke="#df4d1f" stroke-width="2" stroke-linejoin="round" stroke-linecap="butt" stroke-width="1.9" stroke-linecap="round"/></g>
<g transform="translate(1841.8000000000002 619.15)" ><path d="M4.9 5.8 V1 H13.5 V5.8" stroke="#df4d1f" stroke-width="2" stroke-linejoin="round" stroke-linecap="butt"/><path d="M4.9 12 H2.6 A1.6 1.6 0 0 1 1 10.4 V7.4 A1.6 1.6 0 0 1 2.6 5.8 H15.5 A1.6 1.6 0 0 1 17.1 7.4 V10.4 A1.6 1.6 0 0 1 15.5 12 H13.5" stroke="#df4d1f" stroke-width="2" stroke-linejoin="round" stroke-linecap="butt"/><rect x="4.9" y="10.2" width="8.6" height="5.5" stroke="#df4d1f" stroke-width="2" stroke-linejoin="round" stroke-linecap="butt"/><circle cx="14.6" cy="8" r=".6" fill="#b03a14"/></g>
<g transform="translate(1841.8000000000002 646.8499999999999)" ><rect x="7.5" y="1" width="13.7" height="9.9" rx="1.3" stroke="#df4d1f" stroke-width="2" stroke-linejoin="round" stroke-linecap="butt"/><path d="M8 2 L14.2 6 L20.7 2" stroke="#df4d1f" stroke-linejoin="round" stroke-linecap="round" stroke-width="1.6"/><path d="M2.4 2.1 H4.7 M1.3 6 H4.7 M.4 9.6 H4.9" stroke="#df4d1f" stroke-width="2" stroke-linejoin="round" stroke-linecap="butt" stroke-width="1.8"/></g>
<g transform="translate(1844.5 671.1)" ><path d="M1 16.6 V1 H15.6 V16.6 L13.2 14.3 L10.75 16.9 L8.3 14.3 L5.85 16.9 L3.4 14.3 Z" stroke="#df4d1f" stroke-width="2" stroke-linejoin="round" stroke-linecap="butt"/><path d="M4 4.8 H8.8 M11.3 4.8 H12.7 M4 8.4 H8.8 M11.3 8.4 H12.7" stroke="#df4d1f" stroke-width="2" stroke-linejoin="round" stroke-linecap="butt" stroke-width="1.8"/></g>
<g transform="translate(1315.6000000000001 729.5)" ><path d="M7.4 15.4 H3 A1.6 1.6 0 0 1 1.4 13.8 V3 A1.6 1.6 0 0 1 3 1.4 H14.2 A1.6 1.6 0 0 1 15.8 3 V7.8" stroke="#df4d1f" stroke-width="2" stroke-linejoin="round" stroke-linecap="butt"/><path d="M5 5.1 H12.6" stroke="#df4d1f" stroke-width="2" stroke-linejoin="round" stroke-linecap="butt" stroke-width="1.8"/><path d="M4.8 8.7 H7.4 M4.8 12 H6" stroke="#df4d1f" stroke-width="2" stroke-linejoin="round" stroke-linecap="butt" stroke-width="1.6"/><circle cx="11.7" cy="12.5" r="3.1" stroke="#df4d1f" stroke-width="2" stroke-linejoin="round" stroke-linecap="butt" stroke-width="1.8"/><path d="M14 14.8 L17.2 18" stroke="#df4d1f" stroke-linejoin="round" stroke-linecap="round" stroke-width="2.1"/></g>
<g transform="translate(1841.8000000000002 703.15)" ><path d="M4.9 5.8 V1 H13.5 V5.8" stroke="#df4d1f" stroke-width="2" stroke-linejoin="round" stroke-linecap="butt"/><path d="M4.9 12 H2.6 A1.6 1.6 0 0 1 1 10.4 V7.4 A1.6 1.6 0 0 1 2.6 5.8 H15.5 A1.6 1.6 0 0 1 17.1 7.4 V10.4 A1.6 1.6 0 0 1 15.5 12 H13.5" stroke="#df4d1f" stroke-width="2" stroke-linejoin="round" stroke-linecap="butt"/><rect x="4.9" y="10.2" width="8.6" height="5.5" stroke="#df4d1f" stroke-width="2" stroke-linejoin="round" stroke-linecap="butt"/><circle cx="14.6" cy="8" r=".6" fill="#b03a14"/></g>
<g transform="translate(1841.8000000000002 730.75)" ><rect x="7.5" y="1" width="13.7" height="9.9" rx="1.3" stroke="#df4d1f" stroke-width="2" stroke-linejoin="round" stroke-linecap="butt"/><path d="M8 2 L14.2 6 L20.7 2" stroke="#df4d1f" stroke-linejoin="round" stroke-linecap="round" stroke-width="1.6"/><path d="M2.4 2.1 H4.7 M1.3 6 H4.7 M.4 9.6 H4.9" stroke="#df4d1f" stroke-width="2" stroke-linejoin="round" stroke-linecap="butt" stroke-width="1.8"/></g>
<g transform="translate(1844.5 755.1)" ><path d="M1 16.6 V1 H15.6 V16.6 L13.2 14.3 L10.75 16.9 L8.3 14.3 L5.85 16.9 L3.4 14.3 Z" stroke="#df4d1f" stroke-width="2" stroke-linejoin="round" stroke-linecap="butt"/><path d="M4 4.8 H8.8 M11.3 4.8 H12.7 M4 8.4 H8.8 M11.3 8.4 H12.7" stroke="#df4d1f" stroke-width="2" stroke-linejoin="round" stroke-linecap="butt" stroke-width="1.8"/></g>
<g transform="translate(1315.6000000000001 800.5)" ><path d="M7.4 15.4 H3 A1.6 1.6 0 0 1 1.4 13.8 V3 A1.6 1.6 0 0 1 3 1.4 H14.2 A1.6 1.6 0 0 1 15.8 3 V7.8" stroke="#df4d1f" stroke-width="2" stroke-linejoin="round" stroke-linecap="butt"/><path d="M5 5.1 H12.6" stroke="#df4d1f" stroke-width="2" stroke-linejoin="round" stroke-linecap="butt" stroke-width="1.8"/><path d="M4.8 8.7 H7.4 M4.8 12 H6" stroke="#df4d1f" stroke-width="2" stroke-linejoin="round" stroke-linecap="butt" stroke-width="1.6"/><circle cx="11.7" cy="12.5" r="3.1" stroke="#df4d1f" stroke-width="2" stroke-linejoin="round" stroke-linecap="butt" stroke-width="1.8"/><path d="M14 14.8 L17.2 18" stroke="#df4d1f" stroke-linejoin="round" stroke-linecap="round" stroke-width="2.1"/></g>
<g transform="translate(1841.8000000000002 790.15)" ><path d="M4.9 5.8 V1 H13.5 V5.8" stroke="#df4d1f" stroke-width="2" stroke-linejoin="round" stroke-linecap="butt"/><path d="M4.9 12 H2.6 A1.6 1.6 0 0 1 1 10.4 V7.4 A1.6 1.6 0 0 1 2.6 5.8 H15.5 A1.6 1.6 0 0 1 17.1 7.4 V10.4 A1.6 1.6 0 0 1 15.5 12 H13.5" stroke="#df4d1f" stroke-width="2" stroke-linejoin="round" stroke-linecap="butt"/><rect x="4.9" y="10.2" width="8.6" height="5.5" stroke="#df4d1f" stroke-width="2" stroke-linejoin="round" stroke-linecap="butt"/><circle cx="14.6" cy="8" r=".6" fill="#b03a14"/></g>
<g transform="translate(1841.8000000000002 817.75)" ><rect x="7.5" y="1" width="13.7" height="9.9" rx="1.3" stroke="#df4d1f" stroke-width="2" stroke-linejoin="round" stroke-linecap="butt"/><path d="M8 2 L14.2 6 L20.7 2" stroke="#df4d1f" stroke-linejoin="round" stroke-linecap="round" stroke-width="1.6"/><path d="M2.4 2.1 H4.7 M1.3 6 H4.7 M.4 9.6 H4.9" stroke="#df4d1f" stroke-width="2" stroke-linejoin="round" stroke-linecap="butt" stroke-width="1.8"/></g>
<g transform="translate(1841.8000000000002 843.25)" ><path d="M4.9 5.8 V1 H13.5 V5.8" stroke="#df4d1f" stroke-width="2" stroke-linejoin="round" stroke-linecap="butt"/><path d="M4.9 12 H2.6 A1.6 1.6 0 0 1 1 10.4 V7.4 A1.6 1.6 0 0 1 2.6 5.8 H15.5 A1.6 1.6 0 0 1 17.1 7.4 V10.4 A1.6 1.6 0 0 1 15.5 12 H13.5" stroke="#df4d1f" stroke-width="2" stroke-linejoin="round" stroke-linecap="butt"/><rect x="4.9" y="10.2" width="8.6" height="5.5" stroke="#df4d1f" stroke-width="2" stroke-linejoin="round" stroke-linecap="butt"/><circle cx="14.6" cy="8" r=".6" fill="#b03a14"/></g>
</svg>
<span class="t" style="left:61.00px;top:6.61px;font-size:25.5px;font-weight:bold;color:#fff;font-style:italic;-webkit-text-stroke:0.35px #fff;transform:scaleX(1.0172);transform-origin:left center">piro</span><span class="t" style="left:111.70px;top:6.61px;font-size:25.5px;font-weight:normal;color:#fff;-webkit-text-stroke:0.55px #27323f;transform:scaleX(0.9483);transform-origin:left center">pos</span><span class="t" style="left:106.00px;top:7.31px;font-size:4px;font-weight:bold;color:#fff;transform:scaleX(0.9514);transform-origin:left center">TM</span><span class="t" style="left:1394.20px;top:8.16px;font-size:13.4px;font-weight:normal;color:#fff;transform:scaleX(1.0077);transform-origin:left center">WebPOS Store</span><span class="t" style="left:1394.30px;top:26.79px;font-size:9.7px;font-weight:normal;color:#fff;-webkit-text-stroke:0.2px #fff;transform:scaleX(0.8679);transform-origin:left center">Register 01</span><span class="t" style="left:1533.60px;top:2.57px;font-size:11.5px;font-weight:normal;color:#fff;transform:scaleX(1.0000);transform-origin:center center">1</span><span class="t" style="left:1776.10px;top:15.00px;font-size:13px;font-weight:bold;color:#fff;transform:scaleX(0.9154);transform-origin:left center">ADMIN WEBPOS</span><span class="t" style="left:45.70px;top:74.10px;font-size:13px;font-weight:normal;color:#27323f;-webkit-text-stroke:0.3px #27323f;transform:scaleX(0.9731);transform-origin:left center">Dashboard</span><span class="t" style="left:45.70px;top:115.00px;font-size:13px;font-weight:normal;color:#27323f;-webkit-text-stroke:0.3px #27323f;transform:scaleX(0.9729);transform-origin:left center">Catalog</span><span class="t" style="left:45.70px;top:156.10px;font-size:13px;font-weight:normal;color:#27323f;-webkit-text-stroke:0.3px #27323f;transform:scaleX(0.9576);transform-origin:left center">New sale</span><span class="t" style="left:45.70px;top:199.80px;font-size:13px;font-weight:normal;color:#27323f;-webkit-text-stroke:0.3px #27323f;transform:scaleX(0.9306);transform-origin:left center">Services</span><span class="t" style="left:45.70px;top:243.70px;font-size:13px;font-weight:normal;color:#27323f;-webkit-text-stroke:0.3px #27323f;transform:scaleX(0.9664);transform-origin:left center">Orders</span><span class="t" style="left:45.70px;top:286.80px;font-size:13px;font-weight:normal;color:#27323f;-webkit-text-stroke:0.3px #27323f;transform:scaleX(0.9384);transform-origin:left center">Finance</span><span class="t" style="left:52.70px;top:329.50px;font-size:13px;font-weight:normal;color:#27323f;-webkit-text-stroke:0.3px #27323f;transform:scaleX(0.9685);transform-origin:left center">Invoices</span><span class="t" style="left:52.70px;top:372.40px;font-size:13px;font-weight:normal;color:#27323f;-webkit-text-stroke:0.3px #27323f;transform:scaleX(0.9583);transform-origin:left center">Payments</span><span class="t" style="left:52.70px;top:416.50px;font-size:13px;font-weight:normal;color:#27323f;-webkit-text-stroke:0.3px #27323f;transform:scaleX(0.9934);transform-origin:left center">Customer credits</span><span class="t" style="left:45.70px;top:459.70px;font-size:13px;font-weight:normal;color:#27323f;-webkit-text-stroke:0.3px #27323f;transform:scaleX(0.9051);transform-origin:left center">CRM</span><span class="t" style="left:45.70px;top:500.60px;font-size:13px;font-weight:normal;color:#27323f;-webkit-text-stroke:0.3px #27323f;transform:scaleX(1.0153);transform-origin:left center">Inventory transfers</span><span class="t" style="left:45.70px;top:542.00px;font-size:13px;font-weight:normal;color:#27323f;-webkit-text-stroke:0.3px #27323f;transform:scaleX(0.9520);transform-origin:left center">Register</span><span class="t" style="left:45.70px;top:583.60px;font-size:13px;font-weight:normal;color:#27323f;-webkit-text-stroke:0.3px #27323f;transform:scaleX(0.9686);transform-origin:left center">Reports</span><span class="t" style="left:45.70px;top:626.50px;font-size:13px;font-weight:normal;color:#27323f;-webkit-text-stroke:0.3px #27323f;transform:scaleX(1.0281);transform-origin:left center">Configuration</span><span class="t" style="left:45.70px;top:671.70px;font-size:13px;font-weight:normal;color:#27323f;-webkit-text-stroke:0.3px #27323f;transform:scaleX(0.8861);transform-origin:left center">CMS</span><span class="t" style="left:25.69px;top:421.68px;font-size:9px;font-weight:bold;color:#3a3a3a;transform:scaleX(1.0000);transform-origin:center center">$</span><span class="t" style="left:210.90px;top:61.44px;font-size:12px;font-weight:normal;color:#444;transform:scaleX(0.9601);transform-origin:left center">Finance</span><span class="t" style="left:255.90px;top:61.87px;font-size:11.5px;font-weight:normal;color:#999;transform:scaleX(0.8335);transform-origin:left center">&gt;</span><span class="t" style="left:265.90px;top:61.44px;font-size:12px;font-weight:bold;color:#27323f;transform:scaleX(0.9931);transform-origin:left center">Invoices</span><span class="t" style="left:210.70px;top:77.99px;font-size:26px;font-weight:normal;color:#212121;transform:scaleX(0.9645);transform-origin:left center">Invoices</span><span class="t" style="left:252.60px;top:146.04px;font-size:12px;font-weight:bold;color:#fff;transform:scaleX(0.8776);transform-origin:left center">FILTERS</span><span class="t" style="left:229.00px;top:217.70px;font-size:13px;font-weight:normal;color:#666;-webkit-text-stroke:0.25px #666;transform:scaleX(1.0164);transform-origin:left center">Invoice #</span><span class="t" style="left:647.00px;top:217.70px;font-size:13px;font-weight:normal;color:#666;-webkit-text-stroke:0.25px #666;transform:scaleX(0.9936);transform-origin:left center">Customer</span><span class="t" style="left:1065.00px;top:217.70px;font-size:13px;font-weight:normal;color:#666;-webkit-text-stroke:0.25px #666;transform:scaleX(0.9577);transform-origin:left center">Status</span><span class="t" style="left:1482.50px;top:217.70px;font-size:13px;font-weight:normal;color:#666;-webkit-text-stroke:0.25px #666;transform:scaleX(1.0096);transform-origin:left center">Order #</span><span class="t" style="left:229.00px;top:280.60px;font-size:13px;font-weight:normal;color:#666;-webkit-text-stroke:0.25px #666;transform:scaleX(0.9926);transform-origin:left center">Period</span><span class="t" style="left:647.00px;top:280.60px;font-size:13px;font-weight:normal;color:#666;-webkit-text-stroke:0.25px #666;transform:scaleX(1.0319);transform-origin:left center">Date from</span><span class="t" style="left:1065.00px;top:280.60px;font-size:13px;font-weight:normal;color:#666;-webkit-text-stroke:0.25px #666;transform:scaleX(1.0066);transform-origin:left center">Date to</span><span class="t" style="left:1516.00px;top:307.65px;font-size:14px;font-weight:normal;color:#666;transform:scaleX(1.0191);transform-origin:left center">Hide paid invoices</span><span class="t" style="left:1749.80px;top:383.82px;font-size:12.5px;font-weight:bold;color:#fff;transform:scaleX(0.8468);transform-origin:left center">RESET</span><span class="t" style="left:1812.30px;top:383.82px;font-size:12.5px;font-weight:bold;color:#fff;transform:scaleX(0.8833);transform-origin:left center">APPLY</span><span class="t" style="left:235.68px;top:449.10px;font-size:13px;font-weight:bold;color:#5e5e5e;transform:scaleX(0.9525);transform-origin:center center">Invoice #</span><span class="t" style="left:391.16px;top:449.10px;font-size:13px;font-weight:bold;color:#5e5e5e;transform:scaleX(0.9475);transform-origin:center center">Customer</span><span class="t" style="left:546.51px;top:449.10px;font-size:13px;font-weight:bold;color:#5e5e5e;transform:scaleX(0.9933);transform-origin:center center">Date</span><span class="t" style="left:618.22px;top:439.10px;font-size:13px;font-weight:bold;color:#5e5e5e;transform:scaleX(0.9771);transform-origin:center center">Due</span><span class="t" style="left:617.13px;top:458.00px;font-size:13px;font-weight:bold;color:#5e5e5e;transform:scaleX(0.9875);transform-origin:center center">date</span><span class="t" style="left:689.42px;top:449.10px;font-size:13px;font-weight:bold;color:#5e5e5e;transform:scaleX(0.9527);transform-origin:center center">Age</span><span class="t" style="left:869.72px;top:449.10px;font-size:13px;font-weight:bold;color:#5e5e5e;transform:scaleX(0.9420);transform-origin:center center">Items</span><span class="t" style="left:1060.32px;top:449.10px;font-size:13px;font-weight:bold;color:#5e5e5e;transform:scaleX(0.9597);transform-origin:center center">Value</span><span class="t" style="left:1134.90px;top:439.10px;font-size:13px;font-weight:bold;color:#5e5e5e;transform:scaleX(0.9501);transform-origin:center center">Payment</span><span class="t" style="left:1135.12px;top:458.00px;font-size:13px;font-weight:bold;color:#5e5e5e;transform:scaleX(0.9286);transform-origin:center center">received</span><span class="t" style="left:1224.06px;top:449.10px;font-size:13px;font-weight:bold;color:#5e5e5e;transform:scaleX(0.9163);transform-origin:center center">Balance</span><span class="t" style="left:1306.34px;top:449.10px;font-size:13px;font-weight:bold;color:#5e5e5e;transform:scaleX(0.9412);transform-origin:center center">Notes</span><span class="t" style="left:1396.13px;top:449.10px;font-size:13px;font-weight:bold;color:#5e5e5e;transform:scaleX(0.9161);transform-origin:center center">Status</span><span class="t" style="left:1494.50px;top:439.10px;font-size:13px;font-weight:bold;color:#5e5e5e;transform:scaleX(0.9490);transform-origin:center center">Order</span><span class="t" style="left:1508.58px;top:458.00px;font-size:13px;font-weight:bold;color:#5e5e5e;transform:scaleX(0.9000);transform-origin:center center">#</span><span class="t" style="left:1565.60px;top:439.10px;font-size:13px;font-weight:bold;color:#5e5e5e;transform:scaleX(0.9483);transform-origin:center center">Payment</span><span class="t" style="left:1568.92px;top:458.00px;font-size:13px;font-weight:bold;color:#5e5e5e;transform:scaleX(0.9797);transform-origin:center center">method</span><span class="t" style="left:1654.60px;top:439.10px;font-size:13px;font-weight:bold;color:#5e5e5e;transform:scaleX(0.9483);transform-origin:center center">Payment</span><span class="t" style="left:1667.51px;top:458.00px;font-size:13px;font-weight:bold;color:#5e5e5e;transform:scaleX(0.9579);transform-origin:center center">term</span><span class="t" style="left:1742.40px;top:439.10px;font-size:13px;font-weight:bold;color:#5e5e5e;transform:scaleX(0.9423);transform-origin:center center">Shipping</span><span class="t" style="left:1757.03px;top:458.00px;font-size:13px;font-weight:bold;color:#5e5e5e;transform:scaleX(0.9875);transform-origin:center center">date</span><span class="t" style="left:1827.36px;top:449.10px;font-size:13px;font-weight:bold;color:#5e5e5e;transform:scaleX(0.9146);transform-origin:center center">Actions</span><span class="t" style="left:240.70px;top:499.80px;font-size:13px;font-weight:bold;color:#fff;transform:scaleX(0.9680);transform-origin:center center">000565</span><span class="t" style="left:364.53px;top:499.80px;font-size:13px;font-weight:bold;color:#fff;transform:scaleX(0.9470);transform-origin:center center">HANNAH WILSON</span><span class="t" style="left:546.97px;top:480.30px;font-size:13px;font-weight:normal;color:#686868;transform:scaleX(0.9981);transform-origin:center center">Nov-</span><span class="t" style="left:551.30px;top:499.30px;font-size:13px;font-weight:normal;color:#686868;transform:scaleX(0.9895);transform-origin:center center">28-</span><span class="t" style="left:546.24px;top:518.30px;font-size:13px;font-weight:normal;color:#686868;transform:scaleX(0.9335);transform-origin:center center">2025</span><span class="t" style="left:616.77px;top:480.30px;font-size:13px;font-weight:normal;color:#686868;transform:scaleX(0.9981);transform-origin:center center">Nov-</span><span class="t" style="left:621.10px;top:499.30px;font-size:13px;font-weight:normal;color:#686868;transform:scaleX(0.9895);transform-origin:center center">28-</span><span class="t" style="left:616.04px;top:518.30px;font-size:13px;font-weight:normal;color:#686868;transform:scaleX(0.9335);transform-origin:center center">2025</span><span class="t" style="left:699.13px;top:499.30px;font-size:13px;font-weight:normal;color:#686868;transform:scaleX(0.9550);transform-origin:center center">-</span><span class="t" style="left:752.20px;top:499.30px;font-size:13px;font-weight:normal;color:#686868;transform:scaleX(0.9376);transform-origin:left center">14K Yellow Engagement Ring</span><span class="t" style="left:1056.30px;top:499.30px;font-size:13px;font-weight:normal;color:#686868;transform:scaleX(0.9064);transform-origin:right center">$262.50</span><span class="t" style="left:1144.00px;top:499.30px;font-size:13px;font-weight:normal;color:#686868;transform:scaleX(0.9234);transform-origin:right center">$291.38</span><span class="t" style="left:1236.10px;top:499.07px;font-size:13.5px;font-weight:bold;color:#525252;transform:scaleX(0.9565);transform-origin:right center">$28.88</span><span class="t" style="left:1233.40px;top:499.07px;font-size:13.5px;font-weight:normal;color:#555;transform:scaleX(1.0000);transform-origin:left center">-</span><span class="t" style="left:1395.77px;top:499.00px;font-size:13px;font-weight:bold;color:#27323f;transform:scaleX(0.9316);transform-origin:center center">Create</span><span class="t" style="left:1491.77px;top:489.80px;font-size:13px;font-weight:normal;color:#686868;transform:scaleX(0.8800);transform-origin:center center">COJO-</span><span class="t" style="left:1490.30px;top:508.80px;font-size:13px;font-weight:normal;color:#686868;transform:scaleX(0.9126);transform-origin:center center">000051</span><span class="t" style="left:1575.16px;top:489.80px;font-size:13px;font-weight:normal;color:#686868;transform:scaleX(0.9629);transform-origin:center center">Credit</span><span class="t" style="left:1578.41px;top:508.80px;font-size:13px;font-weight:normal;color:#686868;transform:scaleX(0.9224);transform-origin:center center">Card</span><span class="t" style="left:1664.06px;top:489.80px;font-size:13px;font-weight:normal;color:#686868;transform:scaleX(0.9629);transform-origin:center center">Credit</span><span class="t" style="left:1667.31px;top:508.80px;font-size:13px;font-weight:normal;color:#686868;transform:scaleX(0.9224);transform-origin:center center">Card</span><span class="t" style="left:1746.88px;top:489.80px;font-size:13px;font-weight:normal;color:#686868;transform:scaleX(0.9773);transform-origin:center center">Nov-28-</span><span class="t" style="left:1755.54px;top:508.80px;font-size:13px;font-weight:normal;color:#686868;transform:scaleX(0.9335);transform-origin:center center">2025</span><span class="t" style="left:240.70px;top:557.90px;font-size:13px;font-weight:bold;color:#fff;transform:scaleX(0.9680);transform-origin:center center">000564</span><span class="t" style="left:363.08px;top:557.90px;font-size:13px;font-weight:bold;color:#fff;transform:scaleX(0.8795);transform-origin:center center">ESTHER TIMOTHE</span><span class="t" style="left:546.97px;top:538.00px;font-size:13px;font-weight:normal;color:#686868;transform:scaleX(0.9981);transform-origin:center center">Nov-</span><span class="t" style="left:551.30px;top:557.00px;font-size:13px;font-weight:normal;color:#686868;transform:scaleX(0.9895);transform-origin:center center">27-</span><span class="t" style="left:546.24px;top:576.00px;font-size:13px;font-weight:normal;color:#686868;transform:scaleX(0.9335);transform-origin:center center">2025</span><span class="t" style="left:616.77px;top:538.00px;font-size:13px;font-weight:normal;color:#686868;transform:scaleX(0.9981);transform-origin:center center">Nov-</span><span class="t" style="left:621.10px;top:557.00px;font-size:13px;font-weight:normal;color:#686868;transform:scaleX(0.9895);transform-origin:center center">27-</span><span class="t" style="left:616.04px;top:576.00px;font-size:13px;font-weight:normal;color:#686868;transform:scaleX(0.9335);transform-origin:center center">2025</span><span class="t" style="left:697.68px;top:547.50px;font-size:13px;font-weight:normal;color:#686868;transform:scaleX(0.9550);transform-origin:center center">1</span><span class="t" style="left:683.24px;top:566.50px;font-size:13px;font-weight:normal;color:#686868;transform:scaleX(0.9024);transform-origin:center center">day(s)</span><span class="t" style="left:752.20px;top:557.00px;font-size:13px;font-weight:normal;color:#686868;transform:scaleX(0.9662);transform-origin:left center">Custom item</span><span class="t" style="left:1045.46px;top:557.00px;font-size:13px;font-weight:normal;color:#686868;transform:scaleX(0.9024);transform-origin:right center">$5,287.50</span><span class="t" style="left:1133.16px;top:557.00px;font-size:13px;font-weight:normal;color:#686868;transform:scaleX(0.9111);transform-origin:right center">$5,875.00</span><span class="t" style="left:1228.59px;top:556.77px;font-size:13.5px;font-weight:bold;color:#525252;transform:scaleX(0.9608);transform-origin:right center">$587.50</span><span class="t" style="left:1226.00px;top:556.77px;font-size:13.5px;font-weight:normal;color:#555;transform:scaleX(1.0000);transform-origin:left center">-</span><span class="t" style="left:1395.77px;top:556.70px;font-size:13px;font-weight:bold;color:#27323f;transform:scaleX(0.9316);transform-origin:center center">Create</span><span class="t" style="left:1491.77px;top:547.50px;font-size:13px;font-weight:normal;color:#686868;transform:scaleX(0.8800);transform-origin:center center">COJO-</span><span class="t" style="left:1490.30px;top:566.50px;font-size:13px;font-weight:normal;color:#686868;transform:scaleX(0.9126);transform-origin:center center">000050</span><span class="t" style="left:1575.16px;top:547.50px;font-size:13px;font-weight:normal;color:#686868;transform:scaleX(0.9629);transform-origin:center center">Credit</span><span class="t" style="left:1578.41px;top:566.50px;font-size:13px;font-weight:normal;color:#686868;transform:scaleX(0.9224);transform-origin:center center">Card</span><span class="t" style="left:1660.44px;top:547.50px;font-size:13px;font-weight:normal;color:#686868;transform:scaleX(0.9542);transform-origin:center center">Due on</span><span class="t" style="left:1661.88px;top:566.50px;font-size:13px;font-weight:normal;color:#686868;transform:scaleX(0.9633);transform-origin:center center">receipt</span><span class="t" style="left:1746.88px;top:547.50px;font-size:13px;font-weight:normal;color:#686868;transform:scaleX(0.9773);transform-origin:center center">Nov-27-</span><span class="t" style="left:1755.54px;top:566.50px;font-size:13px;font-weight:normal;color:#686868;transform:scaleX(0.9335);transform-origin:center center">2025</span><span class="t" style="left:240.70px;top:639.20px;font-size:13px;font-weight:bold;color:#fff;transform:scaleX(0.9680);transform-origin:center center">000563</span><span class="t" style="left:363.08px;top:639.20px;font-size:13px;font-weight:bold;color:#fff;transform:scaleX(0.8795);transform-origin:center center">ESTHER TIMOTHE</span><span class="t" style="left:546.97px;top:620.00px;font-size:13px;font-weight:normal;color:#686868;transform:scaleX(0.9981);transform-origin:center center">Nov-</span><span class="t" style="left:551.30px;top:639.00px;font-size:13px;font-weight:normal;color:#686868;transform:scaleX(0.9895);transform-origin:center center">27-</span><span class="t" style="left:546.24px;top:658.00px;font-size:13px;font-weight:normal;color:#686868;transform:scaleX(0.9335);transform-origin:center center">2025</span><span class="t" style="left:616.77px;top:620.00px;font-size:13px;font-weight:normal;color:#686868;transform:scaleX(0.9981);transform-origin:center center">Nov-</span><span class="t" style="left:621.10px;top:639.00px;font-size:13px;font-weight:normal;color:#686868;transform:scaleX(0.9895);transform-origin:center center">27-</span><span class="t" style="left:616.04px;top:658.00px;font-size:13px;font-weight:normal;color:#686868;transform:scaleX(0.9335);transform-origin:center center">2025</span><span class="t" style="left:697.68px;top:629.50px;font-size:13px;font-weight:normal;color:#686868;transform:scaleX(0.9550);transform-origin:center center">1</span><span class="t" style="left:683.24px;top:648.50px;font-size:13px;font-weight:normal;color:#686868;transform:scaleX(0.9024);transform-origin:center center">day(s)</span><span class="t" style="left:752.20px;top:639.00px;font-size:13px;font-weight:normal;color:#686868;transform:scaleX(0.9370);transform-origin:left center">Bangle Bracelet</span><span class="t" style="left:1056.30px;top:639.00px;font-size:13px;font-weight:normal;color:#686868;transform:scaleX(0.9064);transform-origin:right center">$405.00</span><span class="t" style="left:1151.23px;top:639.00px;font-size:13px;font-weight:normal;color:#686868;transform:scaleX(0.8927);transform-origin:right center">$45.00</span><span class="t" style="left:1228.59px;top:638.77px;font-size:13.5px;font-weight:bold;color:#525252;transform:scaleX(0.9629);transform-origin:right center">$360.00</span><span class="t" style="left:1375.54px;top:638.70px;font-size:13px;font-weight:bold;color:#27323f;transform:scaleX(0.9515);transform-origin:center center">Partially paid</span><span class="t" style="left:1496.83px;top:629.50px;font-size:13px;font-weight:normal;color:#686868;transform:scaleX(0.9228);transform-origin:center center">LSO-</span><span class="t" style="left:1490.30px;top:648.50px;font-size:13px;font-weight:normal;color:#686868;transform:scaleX(0.9126);transform-origin:center center">000028</span><span class="t" style="left:1577.32px;top:639.00px;font-size:13px;font-weight:normal;color:#686868;transform:scaleX(0.8893);transform-origin:center center">Cash</span><span class="t" style="left:1655.74px;top:620.00px;font-size:13px;font-weight:normal;color:#686868;transform:scaleX(0.9160);transform-origin:center center">Layaway</span><span class="t" style="left:1656.46px;top:639.00px;font-size:13px;font-weight:normal;color:#686868;transform:scaleX(0.9724);transform-origin:center center">payment</span><span class="t" style="left:1668.40px;top:658.00px;font-size:13px;font-weight:normal;color:#686868;transform:scaleX(0.9808);transform-origin:center center">term</span><span class="t" style="left:1746.88px;top:629.50px;font-size:13px;font-weight:normal;color:#686868;transform:scaleX(0.9773);transform-origin:center center">Nov-27-</span><span class="t" style="left:1755.54px;top:648.50px;font-size:13px;font-weight:normal;color:#686868;transform:scaleX(0.9335);transform-origin:center center">2025</span><span class="t" style="left:240.70px;top:733.90px;font-size:13px;font-weight:bold;color:#fff;transform:scaleX(0.9680);transform-origin:center center">000562</span><span class="t" style="left:363.08px;top:733.90px;font-size:13px;font-weight:bold;color:#fff;transform:scaleX(0.8795);transform-origin:center center">ESTHER TIMOTHE</span><span class="t" style="left:546.97px;top:713.80px;font-size:13px;font-weight:normal;color:#686868;transform:scaleX(0.9981);transform-origin:center center">Nov-</span><span class="t" style="left:551.30px;top:732.80px;font-size:13px;font-weight:normal;color:#686868;transform:scaleX(0.9895);transform-origin:center center">27-</span><span class="t" style="left:546.24px;top:751.80px;font-size:13px;font-weight:normal;color:#686868;transform:scaleX(0.9335);transform-origin:center center">2025</span><span class="t" style="left:616.77px;top:713.80px;font-size:13px;font-weight:normal;color:#686868;transform:scaleX(0.9981);transform-origin:center center">Nov-</span><span class="t" style="left:621.10px;top:732.80px;font-size:13px;font-weight:normal;color:#686868;transform:scaleX(0.9895);transform-origin:center center">27-</span><span class="t" style="left:616.04px;top:751.80px;font-size:13px;font-weight:normal;color:#686868;transform:scaleX(0.9335);transform-origin:center center">2025</span><span class="t" style="left:697.68px;top:723.30px;font-size:13px;font-weight:normal;color:#686868;transform:scaleX(0.9550);transform-origin:center center">1</span><span class="t" style="left:683.24px;top:742.30px;font-size:13px;font-weight:normal;color:#686868;transform:scaleX(0.9024);transform-origin:center center">day(s)</span><span class="t" style="left:752.20px;top:732.80px;font-size:13px;font-weight:normal;color:#686868;transform:scaleX(0.9311);transform-origin:left center">14K Yellow Bracelet</span><span class="t" style="left:1056.30px;top:732.80px;font-size:13px;font-weight:normal;color:#686868;transform:scaleX(0.9064);transform-origin:right center">$270.00</span><span class="t" style="left:1144.00px;top:732.80px;font-size:13px;font-weight:normal;color:#686868;transform:scaleX(0.9234);transform-origin:right center">$300.00</span><span class="t" style="left:1236.10px;top:732.57px;font-size:13.5px;font-weight:bold;color:#525252;transform:scaleX(0.9565);transform-origin:right center">$30.00</span><span class="t" style="left:1233.40px;top:732.57px;font-size:13.5px;font-weight:normal;color:#555;transform:scaleX(1.0000);transform-origin:left center">-</span><span class="t" style="left:1402.27px;top:732.50px;font-size:13px;font-weight:bold;color:#27323f;transform:scaleX(0.9283);transform-origin:center center">Paid</span><span class="t" style="left:1496.10px;top:723.30px;font-size:13px;font-weight:normal;color:#686868;transform:scaleX(0.8963);transform-origin:center center">PSO-</span><span class="t" style="left:1490.30px;top:742.30px;font-size:13px;font-weight:normal;color:#686868;transform:scaleX(0.9126);transform-origin:center center">000258</span><span class="t" style="left:1577.32px;top:732.80px;font-size:13px;font-weight:normal;color:#686868;transform:scaleX(0.8893);transform-origin:center center">Cash</span><span class="t" style="left:1660.44px;top:723.30px;font-size:13px;font-weight:normal;color:#686868;transform:scaleX(0.9542);transform-origin:center center">Due on</span><span class="t" style="left:1661.88px;top:742.30px;font-size:13px;font-weight:normal;color:#686868;transform:scaleX(0.9633);transform-origin:center center">receipt</span><span class="t" style="left:1746.88px;top:723.30px;font-size:13px;font-weight:normal;color:#686868;transform:scaleX(0.9773);transform-origin:center center">Nov-27-</span><span class="t" style="left:1755.54px;top:742.30px;font-size:13px;font-weight:normal;color:#686868;transform:scaleX(0.9335);transform-origin:center center">2025</span><span class="t" style="left:240.70px;top:804.80px;font-size:13px;font-weight:bold;color:#fff;transform:scaleX(0.9680);transform-origin:center center">000561</span><span class="t" style="left:371.02px;top:804.80px;font-size:13px;font-weight:bold;color:#fff;transform:scaleX(0.8742);transform-origin:center center">ABC CASTINGS</span><span class="t" style="left:546.97px;top:784.80px;font-size:13px;font-weight:normal;color:#686868;transform:scaleX(0.9647);transform-origin:center center">Sep-</span><span class="t" style="left:551.30px;top:803.80px;font-size:13px;font-weight:normal;color:#686868;transform:scaleX(0.9895);transform-origin:center center">08-</span><span class="t" style="left:546.24px;top:822.80px;font-size:13px;font-weight:normal;color:#686868;transform:scaleX(0.9335);transform-origin:center center">2025</span><span class="t" style="left:616.77px;top:784.80px;font-size:13px;font-weight:normal;color:#686868;transform:scaleX(0.9647);transform-origin:center center">Sep-</span><span class="t" style="left:621.10px;top:803.80px;font-size:13px;font-weight:normal;color:#686868;transform:scaleX(0.9895);transform-origin:center center">08-</span><span class="t" style="left:616.04px;top:822.80px;font-size:13px;font-weight:normal;color:#686868;transform:scaleX(0.9335);transform-origin:center center">2025</span><span class="t" style="left:694.07px;top:794.30px;font-size:13px;font-weight:normal;color:#686868;transform:scaleX(0.9550);transform-origin:center center">81</span><span class="t" style="left:683.24px;top:813.30px;font-size:13px;font-weight:normal;color:#686868;transform:scaleX(0.9024);transform-origin:center center">day(s)</span><span class="t" style="left:752.20px;top:803.80px;font-size:13px;font-weight:normal;color:#686868;transform:scaleX(0.9329);transform-origin:left center">14K Yellow Bracelet, 14K Yellow Gold Necklace,...</span><span class="t" style="left:1045.46px;top:803.80px;font-size:13px;font-weight:normal;color:#686868;transform:scaleX(0.9024);transform-origin:right center">$2,575.00</span><span class="t" style="left:1158.45px;top:803.80px;font-size:13px;font-weight:normal;color:#686868;transform:scaleX(0.8910);transform-origin:right center">$0.00</span><span class="t" style="left:1217.34px;top:803.57px;font-size:13.5px;font-weight:bold;color:#525252;transform:scaleX(0.9490);transform-origin:right center">$2,575.00</span><span class="t" style="left:1395.41px;top:803.50px;font-size:13px;font-weight:bold;color:#27323f;transform:scaleX(0.8983);transform-origin:center center">Issued</span><span class="t" style="left:1496.10px;top:794.30px;font-size:13px;font-weight:normal;color:#686868;transform:scaleX(0.8963);transform-origin:center center">PSO-</span><span class="t" style="left:1490.30px;top:813.30px;font-size:13px;font-weight:normal;color:#686868;transform:scaleX(0.9126);transform-origin:center center">000257</span><span class="t" style="left:1575.16px;top:794.30px;font-size:13px;font-weight:normal;color:#686868;transform:scaleX(0.9629);transform-origin:center center">Credit</span><span class="t" style="left:1578.41px;top:813.30px;font-size:13px;font-weight:normal;color:#686868;transform:scaleX(0.9224);transform-origin:center center">Card</span><span class="t" style="left:1660.44px;top:794.30px;font-size:13px;font-weight:normal;color:#686868;transform:scaleX(0.9542);transform-origin:center center">Due on</span><span class="t" style="left:1661.88px;top:813.30px;font-size:13px;font-weight:normal;color:#686868;transform:scaleX(0.9633);transform-origin:center center">receipt</span><span class="t" style="left:1746.88px;top:794.30px;font-size:13px;font-weight:normal;color:#686868;transform:scaleX(0.9773);transform-origin:center center">Sep-08-</span><span class="t" style="left:1755.54px;top:813.30px;font-size:13px;font-weight:normal;color:#686868;transform:scaleX(0.9335);transform-origin:center center">2025</span>
</body></html>
